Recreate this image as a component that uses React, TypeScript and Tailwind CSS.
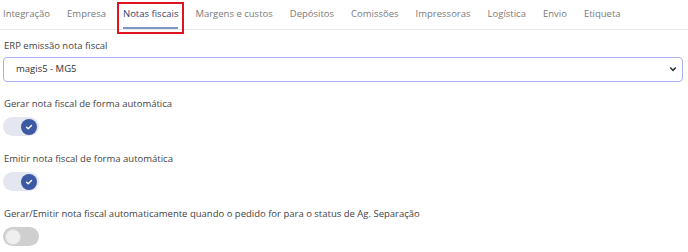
import { useState } from 'react'

const tabs = ['Integração', 'Empresa', 'Notas fiscais', 'Margens e custos', 'Depósitos', 'Comissões', 'Impressoras', 'Logística', 'Envio', 'Etiqueta']

function Toggle({ on, onChange }: { on: boolean; onChange: () => void }) {
  return (
    <button
      type="button"
      onClick={onChange}
      className={[
        'relative w-[36px] h-[19px] rounded-full shrink-0',
        on ? 'bg-[#e4e6f0]' : 'bg-[#cfcfcf]',
      ].join(' ')}
    >
      <span
        className={[
          'absolute top-[1.5px] w-[16px] h-[16px] rounded-full flex items-center justify-center',
          on ? 'left-[18px] bg-[#3b5aa3]' : 'left-[2px] bg-[#efefef] border border-[#dcdcdc]',
        ].join(' ')}
      >
        {on && (
          <svg width="8" height="8" viewBox="0 0 8 8" fill="none">
            <path d="M1.5 4.2 3.2 5.8 6.5 2.4" stroke="white" strokeWidth="1.4" strokeLinecap="round" strokeLinejoin="round" />
          </svg>
        )}
      </span>
    </button>
  )
}

export default function App() {
  const [gerar, setGerar]   = useState(true)
  const [emitir, setEmitir] = useState(true)
  const [sep, setSep]       = useState(false)

  return (
    <div className="w-[688px] h-[252px] bg-white text-[9.5px] font-['Open_Sans',sans-serif] overflow-hidden">
      <div className="flex items-end gap-[17px] h-[30px] border-b border-[#e6e8f0] pl-[3px]">
        {tabs.map(t => (
          <div
            key={t}
            className={[
              'relative h-[30px] flex items-center whitespace-nowrap shrink-0',
              t === 'Notas fiscais' ? 'text-[#34466e]' : 'text-[#7a7a7a]',
            ].join(' ')}
          >
            {t}
            {t === 'Notas fiscais' && (
              <>
                <span className="absolute left-0 right-0 bottom-[0px] h-[2px] bg-[#7f96c9]" />
                <span className="absolute -left-[6px] -right-[6px] top-[3px] -bottom-[5px] border-2 border-[#e0141e]" />
              </>
            )}
          </div>
        ))}
      </div>

      <div className="px-[3px] pt-[9px] text-[#444]">
        <p className="ml-[1px] leading-[14px]">ERP emissão nota fiscal</p>
        <div className="relative mt-[4px] mr-[2px]">
          <select className="w-full h-[25px] appearance-none rounded-[4px] border border-[#a9b1f2] bg-white pl-[12px] text-[9.5px] text-[#333] outline-none">
            <option>magis5 - MG5</option>
          </select>
          <svg className="absolute right-[6px] top-[9px] pointer-events-none" width="8" height="6" viewBox="0 0 8 6" fill="none">
            <path d="M1.2 1.5 4 4.3 6.8 1.5" stroke="#333" strokeWidth="1.6" />
          </svg>
        </div>

        <p className="ml-[1px] mt-[15px] leading-[14px]">Gerar nota fiscal de forma automática</p>
        <div className="flex mt-[6px]"><Toggle on={gerar} onChange={() => setGerar(v => !v)} /></div>

        <p className="ml-[1px] mt-[16px] leading-[14px]">Emitir nota fiscal de forma automática</p>
        <div className="flex mt-[6px]"><Toggle on={emitir} onChange={() => setEmitir(v => !v)} /></div>

        <p className="ml-[1px] mt-[16px] leading-[14px]">Gerar/Emitir nota fiscal automaticamente quando o pedido for para o status de Ag. Separação</p>
        <div className="flex mt-[6px]"><Toggle on={sep} onChange={() => setSep(v => !v)} /></div>
      </div>
    </div>
  )
}
